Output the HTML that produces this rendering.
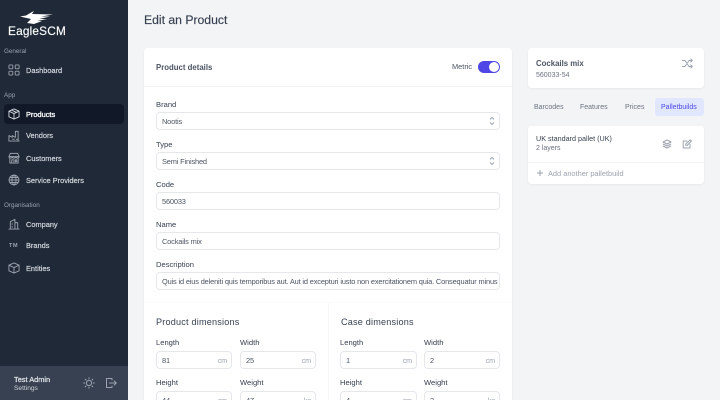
<!DOCTYPE html>
<html><head><meta charset="utf-8"><style>
*{box-sizing:border-box}
html,body{margin:0;padding:0;width:720px;height:400px;overflow:hidden}
body{background:#f3f4f6;font-family:"Liberation Sans",sans-serif;font-size:8px;color:#374151}
#wrap{position:absolute;left:0;top:0;width:720px;height:400px;overflow:hidden;background:#f3f4f6}
.a{position:absolute;white-space:nowrap}
#side{position:absolute;left:0;top:0;width:128px;height:400px;background:#1f2937}
#foot{position:absolute;left:0;top:366px;width:128px;height:34px;background:#374151}
.nav{position:absolute;left:26px;color:#d1d5db;font-size:7.4px;line-height:10px;white-space:nowrap;-webkit-text-stroke:.2px #d1d5db}
.sec{position:absolute;left:4px;color:#9ca3af;font-size:6.3px;line-height:8px}
.ic{position:absolute;left:8px;width:12px;height:12px;fill:none;stroke:#9ca3af;stroke-width:1;stroke-linecap:round;stroke-linejoin:round}
.card{position:absolute;background:#fff;border-radius:4px;box-shadow:0 1px 2px rgba(0,0,0,.05)}
.lb{position:absolute;font-size:7.6px;line-height:10px;color:#374151;white-space:nowrap}
.in{position:absolute;height:18px;background:#fff;border:1px solid #e5e7eb;border-radius:4px;font-size:7.4px;line-height:17px;letter-spacing:-.15px;padding-left:5px;color:#4b5563;white-space:nowrap;overflow:hidden}
.u{position:absolute;right:4px;top:0;color:#9ca3af;font-size:7.2px}
.h{position:absolute;font-size:9.1px;line-height:12px;color:#374151;letter-spacing:.2px;white-space:nowrap}
.tab{position:absolute;top:103px;font-size:7px;line-height:10px;color:#6b7280;white-space:nowrap}
</style></head><body><div id="wrap">
<div id="side"></div>
<svg class="a" style="left:20px;top:11px" width="34" height="14" viewBox="0 0 34 14"><path d="M0 5.5 L6 4.5 L12 1 L14 0 L12 3 L33 3.5 L21 5.5 L30 5.5 L19 8 L27 8 L17 10 L22 10 L14 13 L7 12 L11 8 Z" fill="#fff"/></svg>
<div class="a" style="left:8px;top:24px;font-size:11.8px;line-height:15px;color:#fff;letter-spacing:.2px;-webkit-text-stroke:.15px #fff">EagleSCM</div>
<div class="sec" style="top:48px">General</div>
<svg class="ic" style="top:64px" viewBox="0 0 13 13"><rect x="1" y="1" width="4.2" height="4.2" rx="1"/><rect x="7.8" y="1" width="4.2" height="4.2" rx="1"/><rect x="1" y="7.8" width="4.2" height="4.2" rx="1"/><rect x="7.8" y="7.8" width="4.2" height="4.2" rx="1"/></svg>
<div class="nav" style="top:66px">Dashboard</div>
<div class="sec" style="top:92px">App</div>
<div class="a" style="left:4px;top:104px;width:120px;height:20px;background:#111827;border-radius:4px"></div>
<svg class="ic" style="top:108px;stroke:#d1d5db" viewBox="0 0 13 13"><path d="M6.5 1L12 3.5V9.5L6.5 12L1 9.5V3.5ZM1 3.5L6.5 6L12 3.5M6.5 6V12M3.7 2.2L9.3 4.8"/></svg>
<div class="nav" style="top:110px;color:#fff;-webkit-text-stroke:.3px #fff">Products</div>
<svg class="ic" style="top:130px" viewBox="0 0 13 13"><path d="M1 12V6L4.5 8V6L8 8V1.5H11V12ZM1 12H12M5 10H7M9 10H10"/></svg>
<div class="nav" style="top:131px">Vendors</div>
<svg class="ic" style="top:152px" viewBox="0 0 13 13"><path d="M2.5 1.5H10.5L12 5H1ZM1 5C1 7 4 7 4.5 5.5C5 7 8 7 8.5 5.5C9 7 12 7 12 5M2 7V12H11V7M4 12V8.5H6.5V12M8 8.5H9.5V10.5H8Z"/></svg>
<div class="nav" style="top:154px">Customers</div>
<svg class="ic" style="top:174px" viewBox="0 0 13 13"><circle cx="6.5" cy="6.5" r="5.3"/><path d="M1.2 6.5H11.8M6.5 1.2C3.5 4 3.5 9 6.5 11.8M6.5 1.2C9.5 4 9.5 9 6.5 11.8M2 3.8H11M2 9.2H11"/></svg>
<div class="nav" style="top:176px">Service Providers</div>
<div class="sec" style="top:202px">Organisation</div>
<svg class="ic" style="top:218px" viewBox="0 0 13 13"><path d="M1 12H12M2.5 12V4L7.5 1.5V12M7.5 5H10.5V12M4.5 6V7M4.5 9V10"/></svg>
<div class="nav" style="top:220px">Company</div>
<div class="a" style="left:9px;top:243px;font-size:5.5px;line-height:7px;color:#9ca3af;font-weight:bold;letter-spacing:.6px">TM</div>
<div class="nav" style="top:241px">Brands</div>
<svg class="ic" style="top:262px" viewBox="0 0 13 13"><path d="M6.5 1L12 3.5V9.5L6.5 12L1 9.5V3.5ZM1 3.5L6.5 6L12 3.5M6.5 6V12"/></svg>
<div class="nav" style="top:264px">Entities</div>
<div id="foot"></div>
<div class="a" style="left:14px;top:375px;font-size:7.4px;line-height:10px;color:#e5e7eb;-webkit-text-stroke:.2px #e5e7eb">Test Admin</div>
<div class="a" style="left:14px;top:384px;font-size:6.6px;line-height:9px;color:#d1d5db">Settings</div>
<svg class="a" style="left:83px;top:377px;fill:none;stroke:#9ca3af;stroke-width:1;stroke-linecap:round" width="12" height="12" viewBox="0 0 12 12"><circle cx="6" cy="6" r="2.6"/><path d="M6 .7V1.7M6 10.3V11.3M.7 6H1.7M10.3 6H11.3M2.2 2.2L3 3M9 9L9.8 9.8M2.2 9.8L3 9M9 3L9.8 2.2"/></svg>
<svg class="a" style="left:105px;top:377px;fill:none;stroke:#9ca3af;stroke-width:1;stroke-linecap:round;stroke-linejoin:round" width="12" height="12" viewBox="0 0 12 12"><path d="M7 3V1.5H1.5V10.5H7V9M4.5 6H11.3M9.3 4L11.3 6L9.3 8"/></svg>

<div class="a" style="left:144px;top:13px;font-size:12.2px;line-height:15px;color:#374151;-webkit-text-stroke:.15px #374151">Edit an Product</div>

<div class="card" style="left:144px;top:48px;width:368px;height:360px"></div>
<div class="a" style="left:144px;top:86px;width:368px;height:1px;background:#f3f4f6"></div>
<div class="a" style="left:156px;top:62px;font-size:7.8px;line-height:11px;font-weight:bold;color:#4b5563">Product details</div>
<div class="a" style="left:452px;top:62px;font-size:7.4px;line-height:10px;color:#4b5563">Metric</div>
<div class="a" style="left:478px;top:61px;width:22px;height:12px;background:#4f46e5;border-radius:6px"></div>
<div class="a" style="left:489px;top:62px;width:10px;height:10px;background:#fff;border-radius:50%"></div>

<div class="lb" style="left:156px;top:100px">Brand</div>
<div class="in" style="left:156px;top:112px;width:344px">Nootis</div>
<svg class="a" style="left:488px;top:116px;fill:none;stroke:#9ca3af;stroke-width:1" width="8" height="10" viewBox="0 0 8 10"><path d="M2 3.5L4 1.5L6 3.5M2 6.5L4 8.5L6 6.5"/></svg>
<div class="lb" style="left:156px;top:140px">Type</div>
<div class="in" style="left:156px;top:152px;width:344px">Semi Finished</div>
<svg class="a" style="left:488px;top:156px;fill:none;stroke:#9ca3af;stroke-width:1" width="8" height="10" viewBox="0 0 8 10"><path d="M2 3.5L4 1.5L6 3.5M2 6.5L4 8.5L6 6.5"/></svg>
<div class="lb" style="left:156px;top:180px">Code</div>
<div class="in" style="left:156px;top:192px;width:344px">560033</div>
<div class="lb" style="left:156px;top:220px">Name</div>
<div class="in" style="left:156px;top:232px;width:344px">Cockails mix</div>
<div class="lb" style="left:156px;top:260px">Description</div>
<div class="in" style="left:156px;top:272px;width:344px">Quis id eius deleniti quis temporibus aut. Aut id excepturi iusto non exercitationem quia. Consequatur minus</div>

<div class="a" style="left:144px;top:302px;width:368px;height:1px;background:#f9fafb"></div>
<div class="a" style="left:328px;top:303px;width:1px;height:97px;background:#f6f7f8"></div>
<div class="h" style="left:156px;top:316px">Product dimensions</div>
<div class="lb" style="left:156px;top:338px">Length</div>
<div class="in" style="left:156px;top:351px;width:76px">81<span class="u">cm</span></div>
<div class="lb" style="left:240px;top:338px">Width</div>
<div class="in" style="left:240px;top:351px;width:76px">25<span class="u">cm</span></div>
<div class="lb" style="left:156px;top:378px">Height</div>
<div class="in" style="left:156px;top:391px;width:76px">44<span class="u">cm</span></div>
<div class="lb" style="left:240px;top:378px">Weight</div>
<div class="in" style="left:240px;top:391px;width:76px">47<span class="u">kg</span></div>
<div class="h" style="left:341px;top:316px">Case dimensions</div>
<div class="lb" style="left:340px;top:338px">Length</div>
<div class="in" style="left:340px;top:351px;width:77px">1<span class="u">cm</span></div>
<div class="lb" style="left:424px;top:338px">Width</div>
<div class="in" style="left:424px;top:351px;width:76px">2<span class="u">cm</span></div>
<div class="lb" style="left:340px;top:378px">Height</div>
<div class="in" style="left:340px;top:391px;width:77px">4<span class="u">cm</span></div>
<div class="lb" style="left:424px;top:378px">Weight</div>
<div class="in" style="left:424px;top:391px;width:76px">3<span class="u">kg</span></div>

<div class="card" style="left:528px;top:48px;width:176px;height:40px"></div>
<div class="a" style="left:536px;top:59px;font-size:7.8px;line-height:10px;font-weight:bold;color:#4b5563">Cockails mix</div>
<div class="a" style="left:536px;top:71px;font-size:7px;line-height:9px;color:#6b7280">560033-54</div>
<svg class="a" style="left:682px;top:58px;fill:none;stroke:#9ca3af;stroke-width:1;stroke-linecap:round;stroke-linejoin:round" width="11" height="11" viewBox="0 0 11 11"><path d="M.5 2.5H3L7 8.5H10.3M.5 8.5H3L4.3 6.5M5.7 4.5L7 2.5H10.3M8.8 1L10.3 2.5L8.8 4M8.8 7L10.3 8.5L8.8 10"/></svg>

<div class="tab" style="left:534px">Barcodes</div>
<div class="tab" style="left:580px">Features</div>
<div class="tab" style="left:625px">Prices</div>
<div class="a" style="left:655px;top:98px;width:49px;height:18px;background:#e0e7ff;border-radius:3px"></div>
<div class="tab" style="left:661px;color:#4f46e5">Palletbuilds</div>

<div class="card" style="left:528px;top:126px;width:176px;height:58px"></div>
<div class="a" style="left:528px;top:162px;width:176px;height:1px;background:#f3f4f6"></div>
<div class="a" style="left:536px;top:134px;font-size:7.2px;line-height:10px;color:#374151">UK standard pallet (UK)</div>
<div class="a" style="left:536px;top:144px;font-size:7px;line-height:9px;color:#6b7280">2 layers</div>
<svg class="a" style="left:662px;top:139px;fill:none;stroke:#9ca3af;stroke-width:1;stroke-linejoin:round" width="10" height="10" viewBox="0 0 10 10"><path d="M5 1L9 3L5 5L1 3ZM1 5L5 7L9 5M1 7L5 9L9 7"/></svg>
<svg class="a" style="left:682px;top:139px;fill:none;stroke:#9ca3af;stroke-width:1;stroke-linejoin:round;stroke-linecap:round" width="10" height="10" viewBox="0 0 10 10"><path d="M5 2H1.2V9H8V5.2M3.8 6.4V5L8.2 .8L9.4 2L5.2 6.4Z"/></svg>
<svg class="a" style="left:536px;top:169px;stroke:#9ca3af;stroke-width:1" width="8" height="8" viewBox="0 0 8 8"><path d="M4 1V7M1 4H7"/></svg>
<div class="a" style="left:548px;top:169px;font-size:7.4px;line-height:10px;color:#9ca3af">Add another palletbuild</div>
</div></body></html>
